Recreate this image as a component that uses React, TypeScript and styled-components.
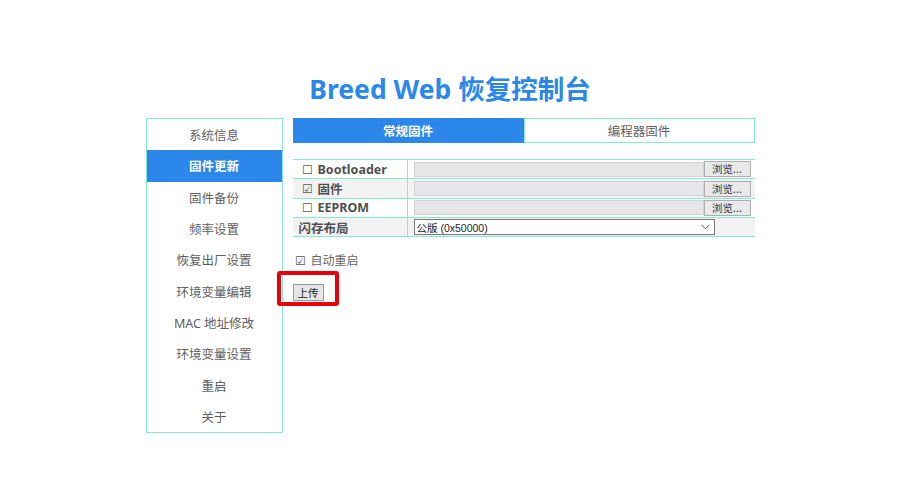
import React from 'react';
import styled, { createGlobalStyle } from 'styled-components';

const Colors = {
  blue: '#2b88ea',
  mint: '#86ead2',
  text: '#606060',
  dark: '#505050',
  rowGray: '#f2f2f2',
  red: '#e8000b',
};

const GlobalStyle = createGlobalStyle`
  body {
    margin: 0;
    background: #ffffff;
    font-family: "Noto Sans", "Noto Sans CJK SC", sans-serif;
  }
`;

const Page = styled.div`
  padding-top: 72px;
  display: flex;
  flex-direction: column;
  align-items: center;
`;

const Title = styled.h1`
  margin: 0 0 12px;
  height: 34px;
  line-height: 34px;
  font-size: 26.5px;
  font-weight: 700;
  color: ${Colors.blue};
  font-family: "Noto Sans", "Noto Sans CJK SC", sans-serif;
`;

const Layout = styled.div`
  display: flex;
  gap: 10px;
  width: 609px;
  align-items: flex-start;
`;

const Sidebar = styled.ul`
  list-style: none;
  margin: 0;
  padding: 0;
  width: 137px;
  box-sizing: border-box;
  border: 1px solid ${Colors.mint};
`;

const NavItem = styled.li<{ $active?: boolean }>`
  height: 31.3px;
  display: flex;
  align-items: center;
  justify-content: center;
  font-size: 12.5px;
  color: ${(p) => (p.$active ? '#ffffff' : Colors.text)};
  font-weight: ${(p) => (p.$active ? 700 : 400)};
  background: ${(p) => (p.$active ? Colors.blue : 'transparent')};
`;

const Main = styled.div`
  flex: 1;
  display: flex;
  flex-direction: column;
`;

const Tabs = styled.div`
  display: flex;
  height: 25px;
`;

const Tab = styled.div<{ $active?: boolean }>`
  flex: 1;
  box-sizing: border-box;
  display: flex;
  align-items: center;
  justify-content: center;
  font-size: 12.5px;
  font-weight: ${(p) => (p.$active ? 700 : 400)};
  color: ${(p) => (p.$active ? '#ffffff' : Colors.text)};
  background: ${(p) => (p.$active ? Colors.blue : '#ffffff')};
  border: 1px solid ${(p) => (p.$active ? Colors.blue : Colors.mint)};
`;

const Table = styled.div`
  margin-top: 16px;
  border-top: 1px solid ${Colors.mint};
`;

const Row = styled.div<{ $gray?: boolean }>`
  display: grid;
  grid-template-columns: 115px 1fr;
  height: 19.25px;
  box-sizing: border-box;
  border-bottom: 1px solid ${Colors.mint};
  background: ${(p) => (p.$gray ? Colors.rowGray : '#ffffff')};
`;

const LabelCell = styled.div`
  display: flex;
  align-items: center;
  gap: 5px;
  padding-left: 9px;
  border-right: 1px solid ${Colors.mint};
  font-size: 12.5px;
  font-weight: 700;
  color: ${Colors.dark};
  white-space: nowrap;
`;

const PlainLabel = styled(LabelCell)`
  padding-left: 6px;
`;

const Box = styled.span`
  font-weight: 400;
  font-size: 12px;
  color: #555;
`;

const ValueCell = styled.div`
  display: flex;
  align-items: center;
  padding-left: 6px;
`;

const FileField = styled.div`
  width: 290px;
  height: 15px;
  box-sizing: border-box;
  background: #e6e6e6;
  border: 1px solid #d2d2d2;
`;

const BrowseButton = styled.button`
  width: 47px;
  height: 16px;
  box-sizing: border-box;
  padding: 0;
  border: 1px solid #adadad;
  background: #e9e9e9;
  font-size: 10.5px;
  line-height: 14px;
  color: #333;
  font-family: "Noto Sans CJK SC", sans-serif;
`;

const SelectBox = styled.div`
  width: 301px;
  height: 16px;
  box-sizing: border-box;
  border: 1px solid #7a7a7a;
  background: #ffffff;
  display: flex;
  align-items: center;
  justify-content: space-between;
  padding: 0 4px 0 2px;
  font-size: 10.5px;
  color: #222;
  font-family: "Liberation Sans", "Noto Sans CJK SC", sans-serif;
`;

const Options = styled.div`
  margin-top: 14px;
  padding-left: 2px;
  display: flex;
  align-items: center;
  gap: 5px;
  font-size: 12px;
  color: #666;
`;

const UploadWrap = styled.div`
  position: relative;
  margin-top: 11px;
  align-self: flex-start;
`;

const Highlight = styled.div`
  position: absolute;
  left: -16px;
  top: -9px;
  width: 62px;
  height: 35px;
  box-sizing: border-box;
  border: 4px solid ${Colors.red};
  border-radius: 3px;
  pointer-events: none;
`;

const UploadButton = styled.button`
  width: 31px;
  height: 17px;
  box-sizing: border-box;
  padding: 0;
  border: 1px solid #9a9a9a;
  background: #e6e6e6;
  font-size: 10.5px;
  line-height: 15px;
  color: #222;
  font-family: "Noto Sans CJK SC", sans-serif;
`;

const navItems = [
  '系统信息',
  '固件更新',
  '固件备份',
  '频率设置',
  '恢复出厂设置',
  '环境变量编辑',
  'MAC 地址修改',
  '环境变量设置',
  '重启',
  '关于',
];

const fileRows = [
  { label: 'Bootloader', checked: false },
  { label: '固件', checked: true },
  { label: 'EEPROM', checked: false },
];

const Chevron: React.FC = () => (
  <svg width="9" height="6" viewBox="0 0 9 6">
    <path d="M0.5 0.8 L4.5 4.8 L8.5 0.8" fill="none" stroke="#555" strokeWidth="1" />
  </svg>
);

const App: React.FC = () => {
  return (
    <>
      <GlobalStyle />
      <Page>
        <Title>Breed Web 恢复控制台</Title>
        <Layout>
          <Sidebar>
            {navItems.map((item) => (
              <NavItem key={item} $active={item === '固件更新'}>
                {item}
              </NavItem>
            ))}
          </Sidebar>
          <Main>
            <Tabs>
              <Tab $active>常规固件</Tab>
              <Tab>编程器固件</Tab>
            </Tabs>
            <Table>
              {fileRows.map((row, i) => (
                <Row key={row.label} $gray={i === 1}>
                  <LabelCell>
                    <Box>{row.checked ? '☑' : '☐'}</Box>
                    {row.label}
                  </LabelCell>
                  <ValueCell>
                    <FileField />
                    <BrowseButton>浏览...</BrowseButton>
                  </ValueCell>
                </Row>
              ))}
              <Row $gray>
                <PlainLabel>闪存布局</PlainLabel>
                <ValueCell>
                  <SelectBox>
                    公版 (0x50000)
                    <Chevron />
                  </SelectBox>
                </ValueCell>
              </Row>
            </Table>
            <Options>
              <Box>☑</Box>
              自动重启
            </Options>
            <UploadWrap>
              <Highlight />
              <UploadButton>上传</UploadButton>
            </UploadWrap>
          </Main>
        </Layout>
      </Page>
    </>
  );
};

export default App;
